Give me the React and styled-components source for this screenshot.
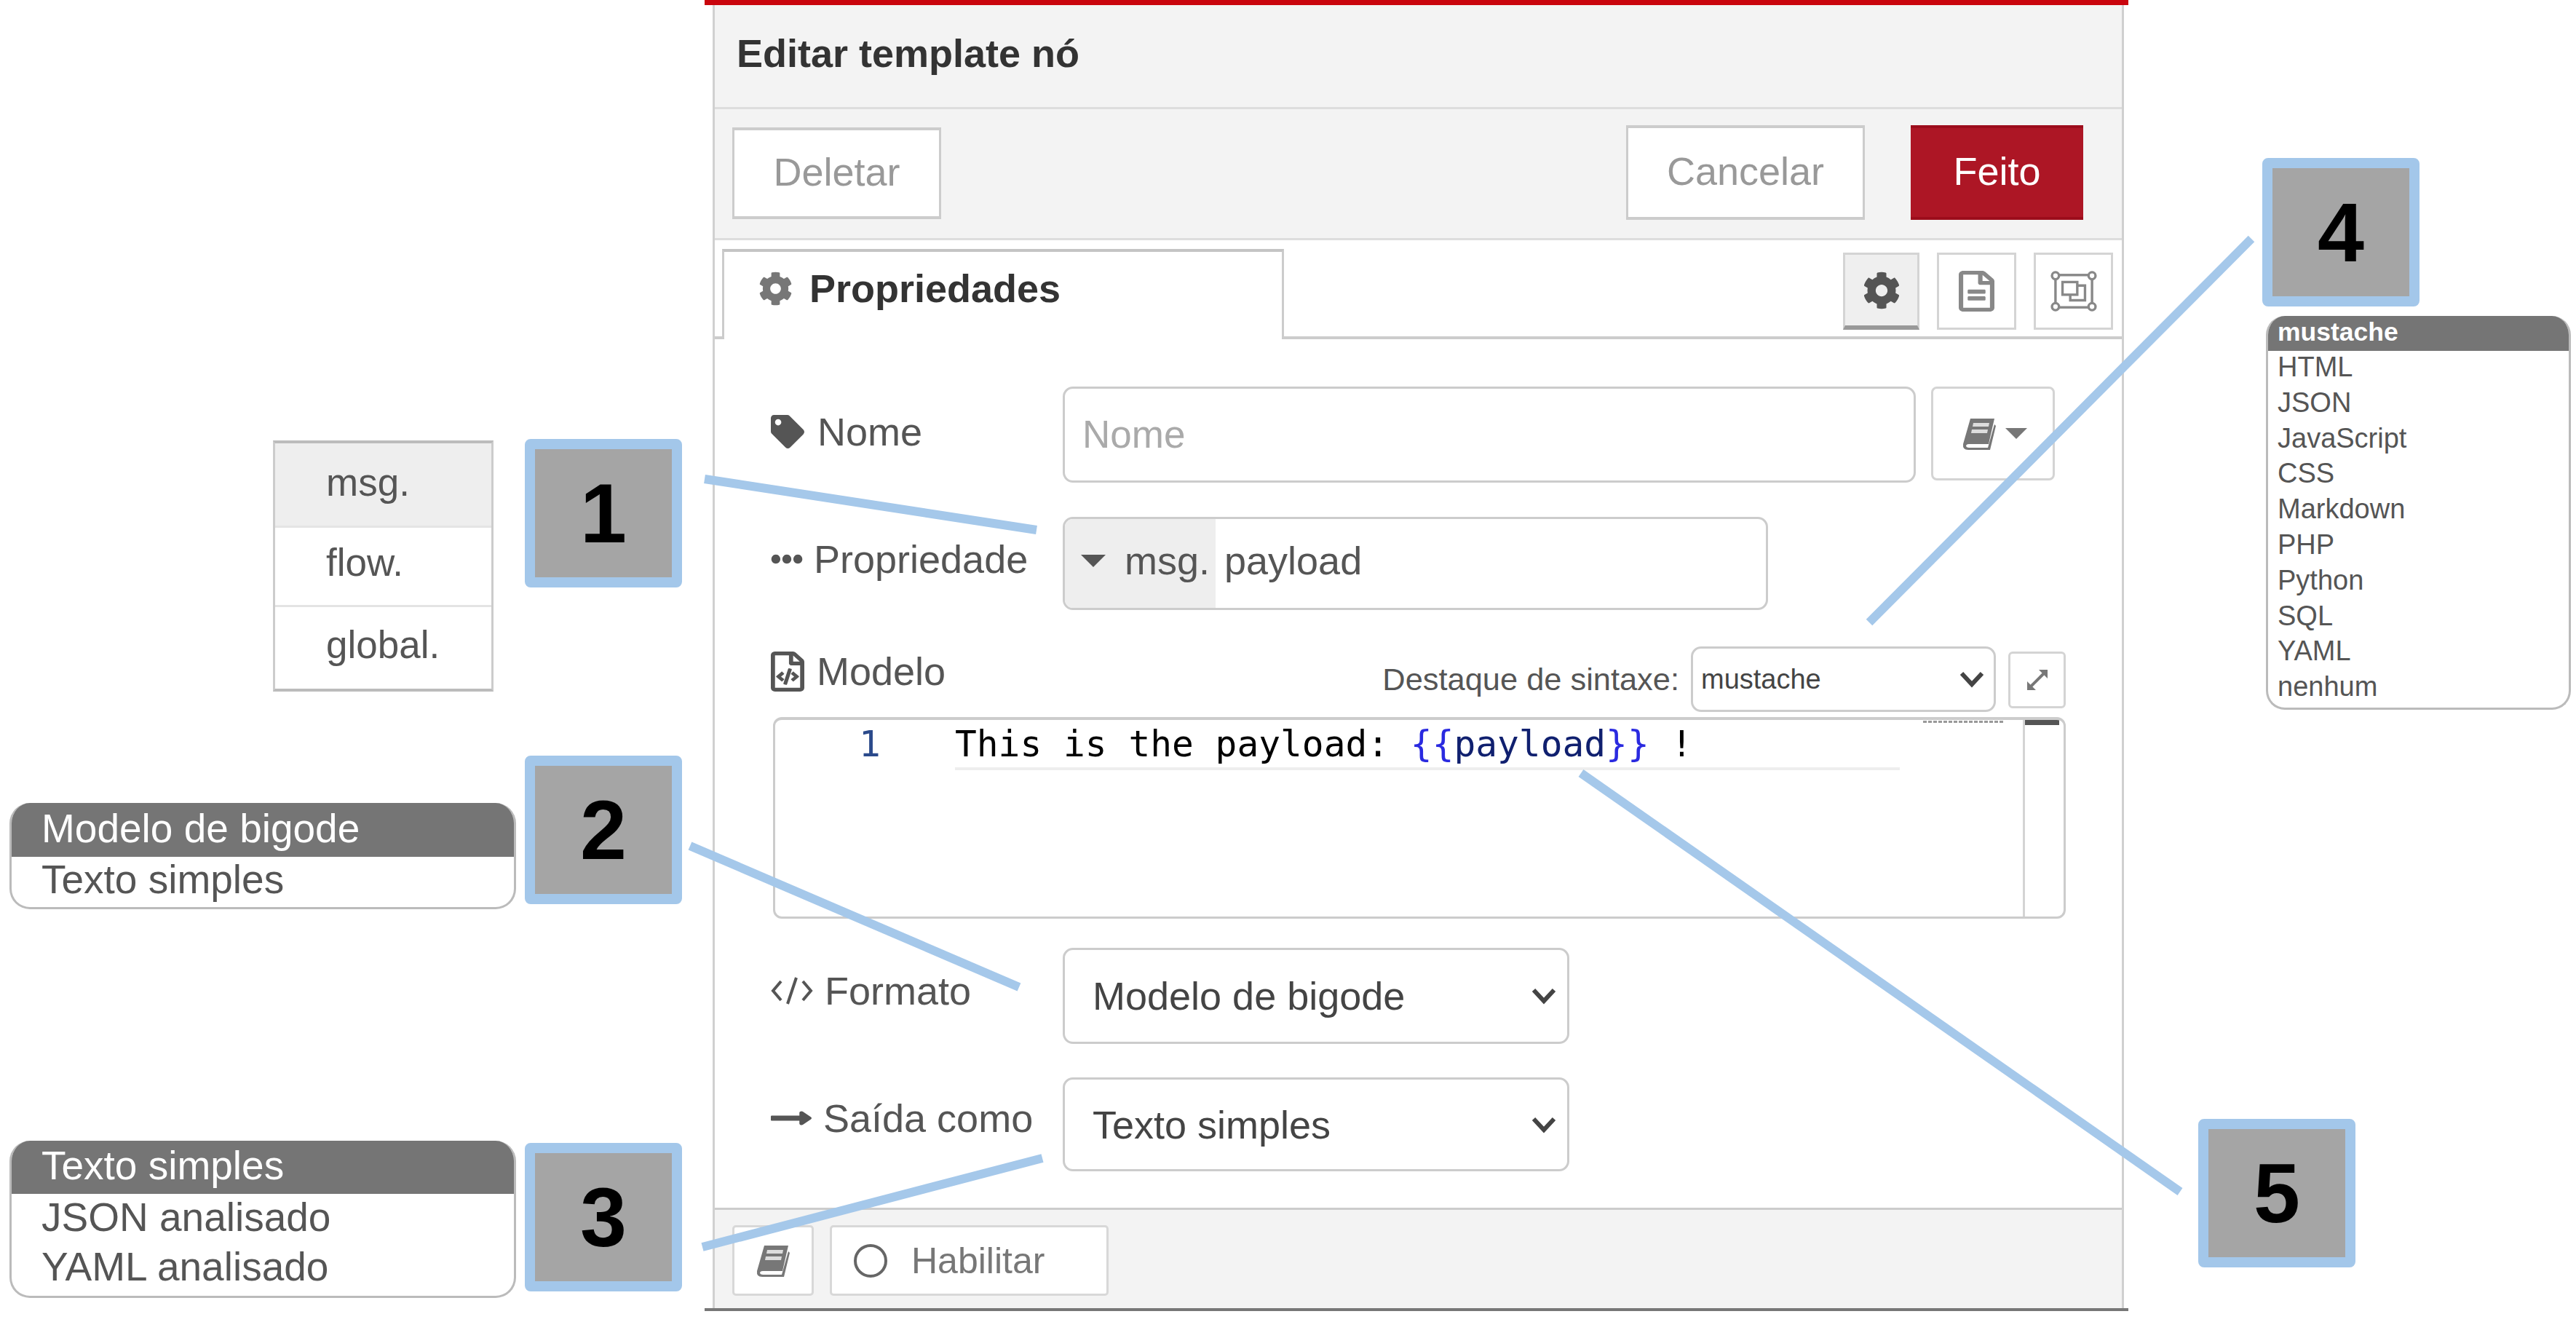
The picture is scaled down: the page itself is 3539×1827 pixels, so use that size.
import React from 'react'
import styled, { createGlobalStyle } from 'styled-components'
import { FaCog, FaTag, FaEllipsisH, FaRegFileCode, FaRegFileAlt, FaLongArrowAltRight } from 'react-icons/fa'

const Global = createGlobalStyle`
    html, body { margin: 0; padding: 0; background: #fff; }
    * { box-sizing: border-box; }
    body { font-family: "Liberation Sans", Arial, sans-serif; }
`

const Page = styled.div`
    position: relative;
    width: 3539px;
    height: 1827px;
    overflow: hidden;
    background: #fff;
`
const Dialog = styled.div`
    width: 1956px;
    margin-left: 968px;
`
const RedBar = styled.div`
    height: 7px;
    background: #c9050d;
`
const Frame = styled.div`
    margin: 0 6px 0 11px;
    border-left: 3px solid #d0d0d0;
    border-right: 3px solid #d0d0d0;
`
const Header = styled.div`
    height: 143px;
    background: #f3f3f3;
    border-bottom: 3px solid #ddd;
    padding: 36px 0 0 30px;
    font-size: 54px;
    line-height: 60px;
    font-weight: 700;
    color: #333;
`
const Toolbar = styled.div`
    display: flex;
    justify-content: space-between;
    height: 180px;
    background: #f3f3f3;
    border-bottom: 3px solid #ddd;
    padding: 22px 53px 0 24px;
`
const Group = styled.div`
    display: flex;
    gap: 63px;
`
const ActionButton = styled.div`
    display: flex;
    align-items: center;
    justify-content: center;
    width: ${p => p.$w}px;
    height: ${p => p.$h || 130}px;
    margin-top: ${p => p.$top || 0}px;
    padding-bottom: 4px;
    font-size: 54px;
    color: ${p => p.$primary ? '#fff' : '#999'};
    background: ${p => p.$primary ? '#ad1625' : '#fff'};
    border: ${p => p.$primary ? 'none' : '3px solid #ccc'};
    border-top: 4px solid ${p => p.$primary ? '#9c0d1c' : '#ccc'};
    border-bottom: 4px solid ${p => p.$primary ? '#9c0d1c' : '#ccc'};
`
const TabBar = styled.div`
    display: flex;
    height: 136px;
    padding: 12px 12px 0 10px;
    background: #fff;
    border-bottom: 4px solid #ccc;
`
const Tab = styled.div`
    display: flex;
    align-items: center;
    gap: 23px;
    width: 772px;
    height: 124px;
    padding: 0 0 20px 47px;
    background: #fff;
    border: 3px solid #ccc;
    border-top: 4px solid #c4c4c4;
    border-bottom: none;
    font-size: 54px;
    font-weight: 700;
    color: #333;
    svg { width: 47px; height: 47px; color: #777; }
`
const TabActions = styled.div`
    display: flex;
    margin: 5px 0 0 auto;
    gap: 24px;
`
const TabButton = styled.div`
    display: flex;
    align-items: center;
    justify-content: center;
    width: ${p => p.$w}px;
    height: 106px;
    border: 3px solid #d4d4d4;
    border-bottom: ${p => p.$active ? '6px solid #999' : '3px solid #d4d4d4'};
    background: ${p => p.$active ? '#efefef' : '#fff'};
    color: ${p => p.$active ? '#555' : '#888'};
    svg { width: ${p => p.$icon || 52}px; height: 56px; }
`
const Body = styled.div`
    height: 1193px;
    padding: 65px 0 0 77px;
    background: #fff;
`
const Row = styled.div`
    display: flex;
    align-items: flex-start;
    height: ${p => p.$h}px;
    margin-top: ${p => p.$top || 0}px;
`
const Label = styled.div`
    display: flex;
    align-items: center;
    gap: ${p => p.$gap || 18}px;
    width: 401px;
    height: ${p => p.$h || 60}px;
    margin-top: ${p => p.$top || 0}px;
    font-size: 54px;
    color: #555;
    white-space: nowrap;
    svg { flex: none; color: #555; }
`
const TextInput = styled.input`
    width: ${p => p.$w}px;
    height: 132px;
    padding: 0 0 2px 24px;
    border: 3px solid #ccc;
    border-radius: 14px;
    font: 53px "Liberation Sans", Arial, sans-serif;
    color: #555;
    outline: none;
    &::placeholder { color: #aaa; opacity: 1; }
`
const LibraryButton = styled.div`
    display: flex;
    align-items: center;
    gap: 12px;
    width: 170px;
    height: 129px;
    margin-left: 21px;
    padding-left: 40px;
    border: 3px solid #d4d4d4;
    border-radius: 8px;
`
const Caret = styled.span`
    width: 0;
    height: 0;
    border-left: ${p => p.$size}px solid transparent;
    border-right: ${p => p.$size}px solid transparent;
    border-top: ${p => p.$size * 1.05}px solid ${p => p.$color};
`
const TypedInput = styled.div`
    display: flex;
    width: 969px;
    height: 128px;
    border: 3px solid #ccc;
    border-radius: 14px;
    overflow: hidden;
    font-size: 54px;
    color: #555;
`
const TypeButton = styled.div`
    display: flex;
    align-items: center;
    gap: 26px;
    width: 207px;
    padding: 0 0 8px 22px;
    background: #eee;
`
const TypedValue = styled.div`
    display: flex;
    align-items: center;
    padding: 0 0 8px 12px;
`
const SyntaxPicker = styled.div`
    display: flex;
    align-items: flex-start;
    margin-left: auto;
    margin-right: 77px;
`
const SyntaxLabel = styled.span`
    font-size: 43.4px;
    line-height: 90px;
    color: #555;
    margin-right: 16px;
`
const SelectBox = styled.div`
    display: flex;
    align-items: center;
    justify-content: space-between;
    width: ${p => p.$w}px;
    height: ${p => p.$h}px;
    padding: 0 ${p => p.$pr}px 0 ${p => p.$pl}px;
    border: 3px solid #ccc;
    border-radius: 14px;
    font-size: ${p => p.$font}px;
    color: #444;
    svg { flex: none; }
`
const ExpandButton = styled.div`
    display: flex;
    align-items: center;
    justify-content: center;
    width: 79px;
    height: 78px;
    margin: 7px 0 0 17px;
    border: 3px solid #d4d4d4;
    border-radius: 6px;
`
const Editor = styled.div`
    position: relative;
    display: flex;
    width: 1776px;
    height: 277px;
    margin: 7px 0 0 3px;
    border: 3px solid #ccc;
    border-top: 4px solid #ccc;
    border-radius: 12px;
    overflow: hidden;
`
const Gutter = styled.div`
    width: 247px;
    padding: 2px 0 0 115px;
    font: 49.5px/62px "DejaVu Sans Mono", monospace;
    color: #2b4a8b;
`
const CodeLine = styled.div`
    width: 1298px;
    height: 69px;
    font: 49.5px/66px "DejaVu Sans Mono", monospace;
    white-space: pre;
    color: #000;
    border-bottom: 4px solid #eee;
`
const Brace = styled.span`
    color: #2a2ae0;
`
const Mustache = styled.span`
    color: #10206f;
`
const ScrollColumn = styled.div`
    width: 56px;
    margin-left: auto;
    border-left: 3px solid #d4d4d4;
`
const ScrollThumb = styled.div`
    height: 7px;
    margin-right: 6px;
    background: #555;
`
const Minimap = styled.div`
    position: absolute;
    top: 1px;
    left: 1577px;
    width: 110px;
    height: 3px;
    background: repeating-linear-gradient(90deg, #999 0 5px, #fff 5px 7px);
`
const Footer = styled.div`
    display: flex;
    gap: 22px;
    height: 138px;
    padding: 21px 0 0 24px;
    background: #f3f3f3;
    border-top: 3px solid #ccc;
`
const FooterButton = styled.div`
    display: flex;
    align-items: center;
    justify-content: ${p => p.$center ? 'center' : 'flex-start'};
    gap: 33px;
    width: ${p => p.$w}px;
    height: 97px;
    padding-left: ${p => p.$center ? 0 : 30}px;
    background: #fff;
    border: 3px solid #d8d8d8;
    border-radius: 5px;
    font-size: 50px;
    color: #777;
`
const RadioDot = styled.span`
    width: 46px;
    height: 46px;
    border: 4px solid #666;
    border-radius: 50%;
`
const BottomRule = styled.div`
    height: 4px;
    background: #777;
`

/* annotations laid over the screenshot */
const Lines = styled.svg`
    position: absolute;
    left: 0;
    top: 0;
    z-index: 2;
    pointer-events: none;
`
const Badge = styled.div`
    position: absolute;
    left: ${p => p.$x}px;
    top: ${p => p.$y}px;
    z-index: 3;
    display: flex;
    align-items: center;
    justify-content: center;
    width: 216px;
    height: 204px;
    background: #a5a5a5;
    border: 14px solid #a3c7ea;
    border-radius: 8px;
    font-size: 115px;
    font-weight: 700;
    color: #000;
`
const PlainMenu = styled.div`
    position: absolute;
    left: 375px;
    top: 605px;
    width: 303px;
    height: 345px;
    background: #fff;
    border: 3px solid #ccc;
    border-top: 4px solid #bbb;
    border-bottom: 4px solid #bbb;
    font-size: 53px;
    color: #555;
`
const PlainItem = styled.div`
    height: ${p => p.$h}px;
    padding: ${p => p.$pt}px 0 0 70px;
    line-height: 60px;
    background: ${p => p.$active ? '#eee' : '#fff'};
    border-bottom: ${p => p.$last ? 'none' : '3px solid #e4e4e4'};
`
const PickList = styled.div`
    position: absolute;
    left: ${p => p.$x}px;
    top: ${p => p.$y}px;
    width: ${p => p.$w}px;
    height: ${p => p.$h}px;
    background: #fff;
    border: 3px solid #bbb;
    border-top: none;
    border-radius: ${p => p.$radius}px;
    overflow: hidden;
    font-size: ${p => p.$font}px;
    color: #555;
`
const PickItem = styled.div`
    height: ${p => p.$h}px;
    line-height: ${p => p.$h - 4}px;
    padding-left: ${p => p.$pl}px;
    white-space: nowrap;
    background: ${p => p.$active ? '#757575' : 'transparent'};
    color: ${p => p.$active ? '#fff' : 'inherit'};
    font-weight: ${p => p.$bold ? 700 : 400};
    font-size: ${p => p.$bold ? '35.5px' : 'inherit'};
`

const Chevron = () => (
    <svg width="36" height="24" viewBox="0 0 36 24">
        <path d="M4 4 L18 19 L32 4" fill="none" stroke="#444" strokeWidth="6" />
    </svg>
)

const BookIcon = ({ w = 47, h = 44, color = '#777' }) => (
    <svg width={w} height={h} viewBox="0 0 47 44">
        <path d="M11 1 H44 L36 36 H9 Q5 36 5 39 Q6 41 9 41 H35 L44 9 L46 11 L38 44 H8 Q0 44 1 36 Z" fill={color} />
        <path d="M15 7 H37 L36 12 H14 Z M13 16 H35 L34 21 H12 Z" fill="#ddd" />
    </svg>
)

const ExpandIcon = () => (
    <svg width="36" height="36" viewBox="0 0 36 36">
        <path d="M8 28 L28 8" stroke="#777" strokeWidth="4" />
        <path d="M20 4 H32 V16 Z M4 20 V32 H16 Z" fill="#777" />
    </svg>
)

const ConfigIcon = () => (
    <svg width="66" height="58" viewBox="0 0 66 58" fill="none" stroke="#888" strokeWidth="3.5">
        <rect x="7" y="6" width="52" height="46" />
        <circle cx="7" cy="7" r="5" fill="#fff" />
        <circle cx="59" cy="7" r="5" fill="#fff" />
        <circle cx="7" cy="51" r="5" fill="#fff" />
        <circle cx="59" cy="51" r="5" fill="#fff" />
        <rect x="17" y="16" width="21" height="18" fill="#fff" />
        <path d="M38 21 H49 V42 H28 V34" />
    </svg>
)

const CodeIcon = () => (
    <svg width="58" height="38" viewBox="0 0 58 38" fill="none" stroke="#555" strokeWidth="4">
        <path d="M14 6 L3 19 L14 32 M44 6 L55 19 L44 32 M35 1 L23 37" />
    </svg>
)

const FORMATS = ['HTML', 'JSON', 'JavaScript', 'CSS', 'Markdown', 'PHP', 'Python', 'SQL', 'YAML', 'nenhum']

const LINES = [
    [968, 658, 1424, 728],
    [948, 1162, 1400, 1356],
    [965, 1713, 1432, 1591],
    [2568, 855, 3093, 328],
    [2172, 1062, 2995, 1637],
]

const App = () => {
    return (
        <Page>
            <Global />
            <Dialog>
                <RedBar />
                <Frame>
                    <Header>Editar template nó</Header>
                    <Toolbar>
                        <ActionButton $w={287} $h={126} $top={3}>Deletar</ActionButton>
                        <Group>
                            <ActionButton $w={328}>Cancelar</ActionButton>
                            <ActionButton $w={237} $primary>Feito</ActionButton>
                        </Group>
                    </Toolbar>
                    <TabBar>
                        <Tab><FaCog />Propriedades</Tab>
                        <TabActions>
                            <TabButton $w={105} $active><FaCog /></TabButton>
                            <TabButton $w={109} $icon={49}><FaRegFileAlt preserveAspectRatio="none" /></TabButton>
                            <TabButton $w={109} $icon={66}><ConfigIcon /></TabButton>
                        </TabActions>
                    </TabBar>
                    <Body>
                        <Row $h={132}>
                            <Label $top={32}><FaTag size={46} />Nome</Label>
                            <TextInput $w={1172} placeholder="Nome" />
                            <LibraryButton><BookIcon /><Caret $size={15} $color="#777" /></LibraryButton>
                        </Row>
                        <Row $h={128} $top={47}>
                            <Label $top={28} $gap={15}><FaEllipsisH size={44} />Propriedade</Label>
                            <TypedInput>
                                <TypeButton><Caret $size={17} $color="#555" />msg.</TypeButton>
                                <TypedValue>payload</TypedValue>
                            </TypedInput>
                        </Row>
                        <Row $h={90} $top={50}>
                            <Label $top={4} $gap={17}><FaRegFileCode style={{ width: 46, height: 55 }} preserveAspectRatio="none" />Modelo</Label>
                            <SyntaxPicker>
                                <SyntaxLabel>Destaque de sintaxe:</SyntaxLabel>
                                <SelectBox $w={419} $h={90} $pl={11} $pr={12} $font={38}>mustache<Chevron /></SelectBox>
                                <ExpandButton><ExpandIcon /></ExpandButton>
                            </SyntaxPicker>
                        </Row>
                        <Editor>
                            <Gutter>1</Gutter>
                            <CodeLine>This is the payload: <Brace>{'{{'}</Brace><Mustache>payload</Mustache><Brace>{'}}'}</Brace> !</CodeLine>
                            <ScrollColumn><ScrollThumb /></ScrollColumn>
                            <Minimap />
                        </Editor>
                        <Row $h={132} $top={40}>
                            <Label $top={29} $gap={16}><CodeIcon />Formato</Label>
                            <SelectBox $w={696} $h={132} $pl={38} $pr={14} $font={54}>Modelo de bigode<Chevron /></SelectBox>
                        </Row>
                        <Row $h={129} $top={46}>
                            <Label $top={26} $gap={16}><FaLongArrowAltRight style={{ width: 56, height: 44 }} preserveAspectRatio="none" />Saída como</Label>
                            <SelectBox $w={696} $h={129} $pl={38} $pr={14} $font={54}>Texto simples<Chevron /></SelectBox>
                        </Row>
                    </Body>
                    <Footer>
                        <FooterButton $w={112} $center><BookIcon /></FooterButton>
                        <FooterButton $w={383}><RadioDot />Habilitar</FooterButton>
                    </Footer>
                </Frame>
                <BottomRule />
            </Dialog>

            <Lines width="3539" height="1827">
                {LINES.map(([x1, y1, x2, y2]) => (
                    <line key={x1} x1={x1} y1={y1} x2={x2} y2={y2} stroke="#a5c8ea" strokeWidth="12" />
                ))}
            </Lines>

            <Badge $x={721} $y={603}>1</Badge>
            <Badge $x={721} $y={1038}>2</Badge>
            <Badge $x={721} $y={1570}>3</Badge>
            <Badge $x={3108} $y={217}>4</Badge>
            <Badge $x={3020} $y={1537}>5</Badge>

            <PlainMenu>
                <PlainItem $h={116} $pt={24} $active>msg.</PlainItem>
                <PlainItem $h={109} $pt={18}>flow.</PlainItem>
                <PlainItem $h={110} $pt={22} $last>global.</PlainItem>
            </PlainMenu>

            <PickList $x={13} $y={1103} $w={696} $h={146} $radius={28} $font={55}>
                <PickItem $h={74} $pl={41} $active>Modelo de bigode</PickItem>
                <PickItem $h={66} $pl={41}>Texto simples</PickItem>
            </PickList>

            <PickList $x={13} $y={1567} $w={696} $h={216} $radius={28} $font={55}>
                <PickItem $h={73} $pl={41} $active>Texto simples</PickItem>
                <PickItem $h={68} $pl={41}>JSON analisado</PickItem>
                <PickItem $h={68} $pl={41}>YAML analisado</PickItem>
            </PickList>

            <PickList $x={3113} $y={434} $w={419} $h={541} $radius={26} $font={38}>
                <PickItem $h={48} $pl={13} $active $bold>mustache</PickItem>
                {FORMATS.map(name => (
                    <PickItem key={name} $h={48.8} $pl={13}>{name}</PickItem>
                ))}
            </PickList>
        </Page>
    )
}

export default App
